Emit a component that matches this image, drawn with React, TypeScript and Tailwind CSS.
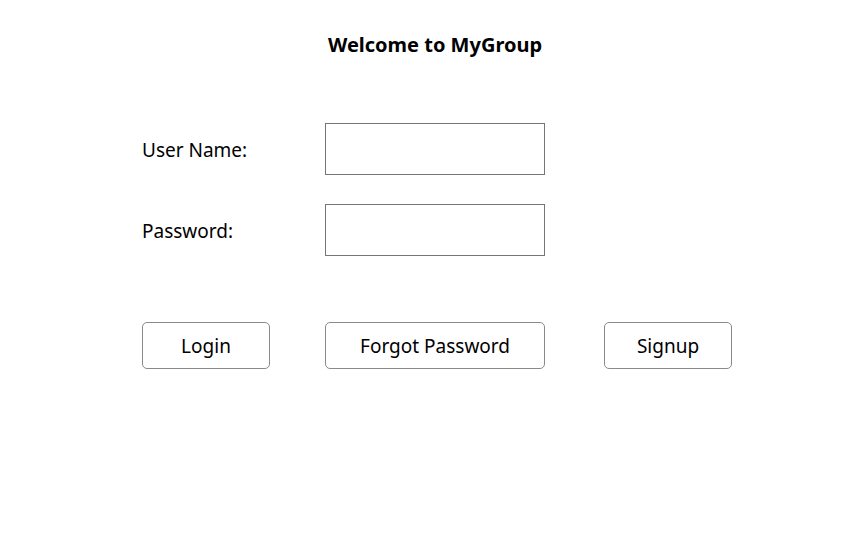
import React from "react";

export default function App() {
  return (
    <div
      className="w-[853px] h-[550px] bg-white text-black"
      style={{ fontFamily: '"Noto Sans", "Open Sans", sans-serif' }}
    >
      <div className="pl-[142px] pt-[31px] flex flex-col">
        <div className="flex">
          <div className="w-[183px]" />
          <div className="w-[220px] text-center font-bold text-[20px] leading-[28px] whitespace-nowrap">
            Welcome to MyGroup
          </div>
        </div>
        <div className="flex items-center mt-[64px] h-[52px]">
          <div className="w-[183px] text-[19px] pt-[3px]">User Name:</div>
          <input className="w-[220px] h-[52px] border border-[#767676] outline-none px-2" />
        </div>
        <div className="flex items-center mt-[29px] h-[52px]">
          <div className="w-[183px] text-[19px] pt-[3px]">Password:</div>
          <input type="password" className="w-[220px] h-[52px] border border-[#767676] outline-none px-2" />
        </div>
        <div className="flex items-center mt-[66px]">
          <button className="w-[128px] h-[47px] border border-[#8a8a8a] rounded-[5px] text-[19px] bg-white pt-[1px]">
            Login
          </button>
          <button className="ml-[55px] w-[220px] h-[47px] border border-[#8a8a8a] rounded-[5px] text-[19px] bg-white pt-[1px]">
            Forgot Password
          </button>
          <button className="ml-[59px] w-[128px] h-[47px] border border-[#8a8a8a] rounded-[5px] text-[19px] bg-white pt-[1px]">
            Signup
          </button>
        </div>
      </div>
    </div>
  );
}
